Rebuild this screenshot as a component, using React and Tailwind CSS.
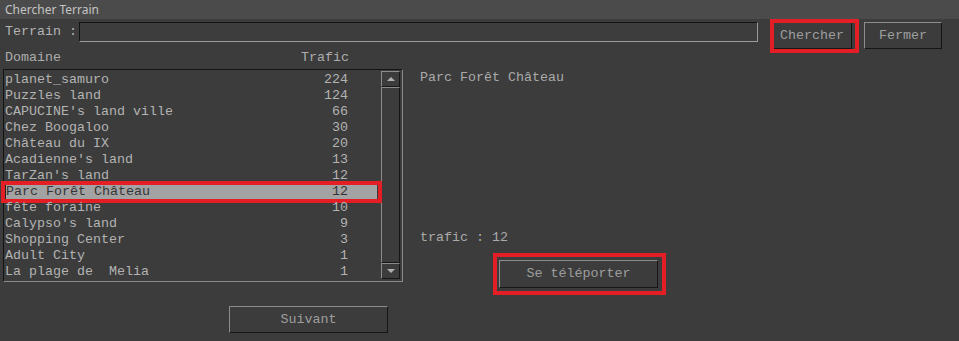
import React from "react";

const rows = [
  ["planet_samuro", "224"],
  ["Puzzles land", "124"],
  ["CAPUCINE's land ville", "66"],
  ["Chez Boogaloo", "30"],
  ["Château du IX", "20"],
  ["Acadienne's land", "13"],
  ["TarZan's land", "12"],
  ["Parc Forêt Château", "12"],
  ["fête foraine", "10"],
  ["Calypso's land", "9"],
  ["Shopping Center", "3"],
  ["Adult City", "1"],
  ["La plage de  Melia", "1"],
];

function Btn({ children, className = "" }) {
  return (
    <div
      className={
        "flex items-center justify-center bg-[#3c3c3c] border border-t-[#8c8c8c] border-l-[#8c8c8c] border-b-[#161616] border-r-[#161616] text-[#9e9e9e] whitespace-pre " +
        className
      }
    >
      {children}
    </div>
  );
}

export default function App() {
  return (
    <div
      className="w-[959px] h-[341px] bg-[#3c3c3c] flex flex-col overflow-hidden text-[13.33px] text-[#b3b3b3]"
      style={{ fontFamily: '"Liberation Mono", "Courier New", monospace' }}
    >
      <div
        className="h-[19px] bg-[#4b4b4b] pl-[5px] text-[12px] leading-[19px] text-[#c4c4c4]"
        style={{ fontFamily: '"Noto Sans", "Open Sans", sans-serif' }}
      >
        Chercher Terrain
      </div>

      <div className="flex items-start mt-[3px] h-[27px]">
        <span className="ml-[5px] w-[74px] leading-[20px] text-[#b3b3b3]">Terrain :</span>
        <div className="w-[679px] h-[20px] bg-[#3d3d3d] border border-t-[#141414] border-l-[#141414] border-b-[#9a9a9a] border-r-[#9a9a9a]" />
        <div className="relative ml-[14px]">
          <Btn className="w-[80px] h-[27px]">Chercher</Btn>
          <div className="absolute left-[-2px] top-[-3px] w-[89px] h-[34px] border-[4px] border-[#e31e24]" />
        </div>
        <Btn className="ml-[12px] w-[78px] h-[27px]">Fermer</Btn>
      </div>

      <div className="flex h-[16px] leading-[16px] mt-[1px] text-[#acacac]">
        <span className="ml-[5px] w-[296px]">Domaine</span>
        <span>Trafic</span>
      </div>

      <div className="flex mt-[3px]">
        <div className="flex flex-col ml-[3px]">
          <div className="flex w-[400px] h-[213px] border border-t-[#141414] border-l-[#141414] border-b-[#8a8a8a] border-r-[#8a8a8a]">
            <div className="flex flex-col w-[377px] pt-[2px]">
              {rows.map(([name, n], i) => {
                const sel = i === 7;
                return (
                  <div
                    key={i}
                    className={
                      "relative flex h-[16px] leading-[16px] ml-[1px] w-[372px] whitespace-pre " +
                      (sel ? "bg-[#a3a3a3] text-[#353535] border-l border-l-[#222]" : "")
                    }
                  >
                    <span className="flex-1">{name}</span>
                    <span className="w-[40px] text-right mr-[29px]">{n}</span>
                    {sel && (
                      <div className="absolute left-[-5px] top-[-3px] w-[381px] h-[22px] border-[4px] border-[#e31e24]" />
                    )}
                  </div>
                );
              })}
            </div>
            <div className="flex flex-col w-[20px] pt-[1px]">
              <div className="h-[16px] w-[19px] flex items-center justify-center border border-t-[#8c8c8c] border-l-[#8c8c8c] border-b-[#161616] border-r-[#161616]">
                <svg width="8" height="4" viewBox="0 0 8 4">
                  <polygon points="4,0 8,4 0,4" fill="#b0b0b0" />
                </svg>
              </div>
              <div className="h-[176px] w-[19px] border border-t-[#8c8c8c] border-l-[#8c8c8c] border-b-[#161616] border-r-[#161616]" />
              <div className="h-[16px] w-[19px] flex items-center justify-center border border-t-[#8c8c8c] border-l-[#8c8c8c] border-b-[#161616] border-r-[#161616]">
                <svg width="8" height="4" viewBox="0 0 8 4">
                  <polygon points="0,0 8,0 4,4" fill="#b0b0b0" />
                </svg>
              </div>
            </div>
          </div>
          <Btn className="ml-[226px] mt-[24px] w-[159px] h-[27px]">Suivant</Btn>
        </div>

        <div className="flex flex-col pl-[17px] pt-[1px] text-[#aaaaaa]">
          <div className="h-[16px] leading-[16px] whitespace-pre">Parc Forêt Château</div>
          <div className="h-[16px] leading-[16px] mt-[144px] whitespace-pre">trafic : 12</div>
          <div className="relative ml-[79px] mt-[14px]">
            <Btn className="w-[159px] h-[28px]">Se téléporter</Btn>
            <div className="absolute left-[-6px] top-[-7px] w-[173px] h-[42px] border-[4px] border-[#e31e24]" />
          </div>
        </div>
      </div>
    </div>
  );
}
